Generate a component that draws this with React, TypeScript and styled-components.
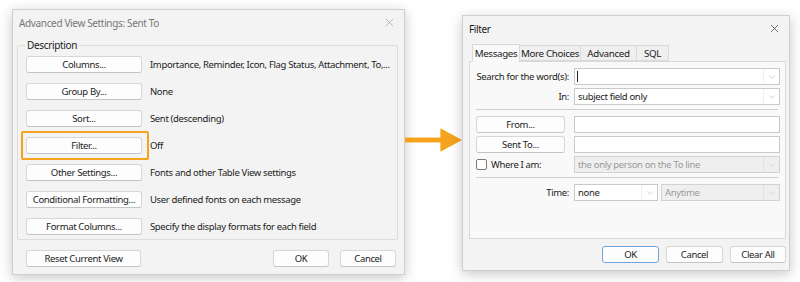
import styled, { createGlobalStyle, css } from 'styled-components'
import { X, ChevronDown } from 'lucide-react'

const fontSize = '9.5px'

const GlobalStyle = createGlobalStyle`
  html, body {
    margin: 0;
    padding: 0;
    background: #ffffff;
  }
  body {
    font-family: 'Noto Sans', 'Open Sans', sans-serif;
    font-size: ${fontSize};
    letter-spacing: -0.35px;
    color: #1c1c1c;
  }
`

const viewRows = [
  { label: 'Columns...', text: 'Importance, Reminder, Icon, Flag Status, Attachment, To,...' },
  { label: 'Group By...', text: 'None' },
  { label: 'Sort...', text: 'Sent (descending)' },
  { label: 'Filter...', text: 'Off', highlight: true },
  { label: 'Other Settings...', text: 'Fonts and other Table View settings' },
  { label: 'Conditional Formatting...', text: 'User defined fonts on each message' },
  { label: 'Format Columns...', text: 'Specify the display formats for each field' },
]

const tabs = [
  { label: 'Messages', width: 48 },
  { label: 'More Choices', width: 62 },
  { label: 'Advanced', width: 57 },
  { label: 'SQL', width: 33 },
]

function Dropdown({ value, disabled, width }: { value: string; disabled?: boolean; width?: number }) {
  return (
    <StyledSelect $disabled={disabled} style={width ? { width } : undefined}>
      <StyledSelectValue>{value}</StyledSelectValue>
      <StyledChevron $disabled={disabled}>
        <ChevronDown size={10} strokeWidth={1} />
      </StyledChevron>
    </StyledSelect>
  )
}

function AdvancedViewSettings() {
  return (
    <StyledDialog $width={393} $height={266} $top={0}>
      <StyledTitleBar $inactive>
        <span>Advanced View Settings: Sent To</span>
        <X size={13} strokeWidth={1} />
      </StyledTitleBar>
      <StyledGroupBox>
        <StyledLegend>Description</StyledLegend>
        {viewRows.map((row) => (
          <StyledViewRow key={row.label}>
            {row.highlight ? (
              <StyledHighlight>
                <StyledButton $width={116}>{row.label}</StyledButton>
              </StyledHighlight>
            ) : (
              <StyledButton $width={116}>{row.label}</StyledButton>
            )}
            <span>{row.text}</span>
          </StyledViewRow>
        ))}
      </StyledGroupBox>
      <StyledLeftFooter>
        <StyledButton $width={115}>Reset Current View</StyledButton>
        <StyledFooterRight>
          <StyledButton $width={56}>OK</StyledButton>
          <StyledButton $width={56}>Cancel</StyledButton>
        </StyledFooterRight>
      </StyledLeftFooter>
    </StyledDialog>
  )
}

function FilterDialog() {
  return (
    <StyledDialog $width={328} $height={256} $top={6}>
      <StyledTitleBar>
        <span>Filter</span>
        <X size={13} strokeWidth={1.2} />
      </StyledTitleBar>
      <StyledTabStrip>
        {tabs.map((tab, i) => (
          <StyledTab key={tab.label} $active={i === 0} $width={tab.width}>
            {tab.label}
          </StyledTab>
        ))}
      </StyledTabStrip>
      <StyledTabPanel>
        <StyledFormGrid>
          <StyledLabel>Search for the word(s):</StyledLabel>
          <StyledInputWrap>
            <StyledCaret />
            <Dropdown value="" />
          </StyledInputWrap>
          <StyledLabel>In:</StyledLabel>
          <Dropdown value="subject field only" />
        </StyledFormGrid>
        <StyledSeparator />
        <StyledFormGrid>
          <StyledButton $width={89}>From...</StyledButton>
          <StyledTextInput />
          <StyledButton $width={89}>Sent To...</StyledButton>
          <StyledTextInput />
          <StyledCheckLabel>
            <StyledCheckbox />
            Where I am:
          </StyledCheckLabel>
          <Dropdown value="the only person on the To line" disabled />
        </StyledFormGrid>
        <StyledSeparator />
        <StyledFormGrid>
          <StyledLabel>Time:</StyledLabel>
          <StyledTimeRow>
            <Dropdown value="none" width={84} />
            <Dropdown value="Anytime" disabled width={119} />
          </StyledTimeRow>
        </StyledFormGrid>
      </StyledTabPanel>
      <StyledRightFooter>
        <StyledButton $width={57} $default>OK</StyledButton>
        <StyledButton $width={57}>Cancel</StyledButton>
        <StyledButton $width={56}>Clear All</StyledButton>
      </StyledRightFooter>
    </StyledDialog>
  )
}

export default function App() {
  return (
    <>
      <GlobalStyle />
      <StyledPage>
        <AdvancedViewSettings />
        <StyledArrowColumn>
          <svg width="58" height="28" viewBox="0 0 58 28">
            <rect x="0" y="10.5" width="37" height="5" fill="#f6a21c" />
            <polygon points="36,1 58,13 36,25" fill="#f6a21c" />
          </svg>
        </StyledArrowColumn>
        <FilterDialog />
      </StyledPage>
    </>
  )
}

const StyledPage = styled.div`
  display: flex;
  align-items: flex-start;
  padding: 9px 0 0 12px;
  width: 800px;
  height: 282px;
  box-sizing: border-box;
`

const StyledDialog = styled.div<{ $width: number; $height: number; $top: number }>`
  width: ${(p) => p.$width}px;
  height: ${(p) => p.$height}px;
  margin-top: ${(p) => p.$top}px;
  box-sizing: border-box;
  background: #f3f3f3;
  border: 1px solid #cfcfcf;
  box-shadow: 0 3px 12px rgba(0, 0, 0, 0.22);
  display: flex;
  flex-direction: column;
  flex-shrink: 0;
`

const StyledTitleBar = styled.div<{ $inactive?: boolean }>`
  height: 25px;
  display: flex;
  align-items: center;
  justify-content: space-between;
  padding: 0 8px 0 6px;
  font-size: 10px;
  color: ${(p) => (p.$inactive ? '#777777' : '#1a1a1a')};
  svg {
    color: ${(p) => (p.$inactive ? '#8a8a8a' : '#222222')};
  }
`

const StyledGroupBox = styled.fieldset`
  margin: 3px 6px 0 4px;
  padding: 4px 8px 4px 8px;
  border: 1px solid #dddddd;
  border-radius: 2px;
  display: flex;
  flex-direction: column;
  gap: 10px;
  min-width: 0;
`

const StyledLegend = styled.legend`
  padding: 0 2px;
  margin-left: -1px;
  font-size: 10px;
  color: #1c1c1c;
`

const StyledViewRow = styled.div`
  display: flex;
  align-items: center;
  gap: 8px;
  white-space: nowrap;
`

const StyledHighlight = styled.div`
  margin: -6px -7px -6px -5px;
  padding: 4px 5px 4px 3px;
  border: 2px solid #f5a31f;
  border-radius: 2px;
  display: flex;
`

const StyledButton = styled.div<{ $width: number; $default?: boolean }>`
  width: ${(p) => p.$width}px;
  height: 17px;
  box-sizing: border-box;
  flex-shrink: 0;
  display: flex;
  align-items: center;
  justify-content: center;
  background: #fdfdfd;
  border: 1px solid #d6d6d6;
  border-bottom-color: #c4c4c4;
  border-radius: 3px;
  font-size: ${fontSize};
  color: #1c1c1c;
  white-space: nowrap;
  ${(p) =>
    p.$default &&
    css`
      border: 1px solid #6fa4d8;
    `}
`

const StyledLeftFooter = styled.div`
  display: flex;
  justify-content: space-between;
  align-items: center;
  padding: 10px 8px 0 13px;
`

const StyledFooterRight = styled.div`
  display: flex;
  gap: 11px;
`

const StyledArrowColumn = styled.div`
  width: 57px;
  margin-top: 118px;
  flex-shrink: 0;
  display: flex;
  svg {
    display: block;
  }
`

const StyledTabStrip = styled.div`
  display: flex;
  align-items: flex-end;
  height: 18px;
  margin: 2px 0 0 9px;
`

const StyledTab = styled.div<{ $active?: boolean; $width: number }>`
  width: ${(p) => p.$width}px;
  height: ${(p) => (p.$active ? 18 : 16)}px;
  box-sizing: border-box;
  flex-shrink: 0;
  display: flex;
  align-items: center;
  justify-content: center;
  white-space: nowrap;
  font-size: 9.8px;
  background: ${(p) => (p.$active ? '#f9f9f9' : '#efefef')};
  border: 1px solid #d9d9d9;
  border-bottom: ${(p) => (p.$active ? 'none' : '1px solid #d9d9d9')};
  margin-left: ${(p) => (p.$active ? 0 : -1)}px;
  position: relative;
  z-index: ${(p) => (p.$active ? 1 : 0)};
  margin-bottom: ${(p) => (p.$active ? -1 : 0)}px;
`

const StyledTabPanel = styled.div`
  margin: 0 3px 0 6px;
  height: 178px;
  box-sizing: border-box;
  background: #f9f9f9;
  border: 1px solid #d9d9d9;
  padding: 6px 5px 0 6px;
`

const StyledFormGrid = styled.div`
  display: grid;
  grid-template-columns: 93px 206px;
  column-gap: 5px;
  row-gap: 3px;
  align-items: center;
`

const StyledLabel = styled.div`
  text-align: right;
  white-space: nowrap;
`

const StyledSelect = styled.div<{ $disabled?: boolean }>`
  height: 17px;
  box-sizing: border-box;
  display: flex;
  align-items: center;
  background: ${(p) => (p.$disabled ? '#efefef' : '#ffffff')};
  border: 1px solid ${(p) => (p.$disabled ? '#d2d2d2' : '#c9c9c9')};
  color: ${(p) => (p.$disabled ? '#9a9a9a' : '#1c1c1c')};
  flex-shrink: 0;
`

const StyledSelectValue = styled.div`
  flex: 1;
  padding-left: 3px;
  white-space: nowrap;
  overflow: hidden;
`

const StyledChevron = styled.div<{ $disabled?: boolean }>`
  width: 15px;
  height: 100%;
  display: flex;
  align-items: center;
  justify-content: center;
  color: ${(p) => (p.$disabled ? '#b5b5b5' : '#8c8c8c')};
  border-left: 1px solid ${(p) => (p.$disabled ? '#e3e3e3' : '#efefef')};
`

const StyledInputWrap = styled.div`
  position: relative;
`

const StyledCaret = styled.span`
  position: absolute;
  left: 3px;
  top: 3px;
  width: 1px;
  height: 11px;
  background: #222222;
`

const StyledTextInput = styled.div`
  height: 17px;
  box-sizing: border-box;
  background: #ffffff;
  border: 1px solid #c9c9c9;
`

const StyledSeparator = styled.div`
  height: 1px;
  background: #cfcfcf;
  margin: 4px 2px 6px 0;
`

const StyledCheckLabel = styled.div`
  display: flex;
  align-items: center;
  gap: 4px;
  white-space: nowrap;
`

const StyledCheckbox = styled.span`
  width: 11px;
  height: 11px;
  box-sizing: border-box;
  border: 1px solid #7a7a7a;
  border-radius: 2px;
  background: #ffffff;
`

const StyledTimeRow = styled.div`
  display: flex;
  gap: 3px;
`

const StyledRightFooter = styled.div`
  display: flex;
  justify-content: flex-end;
  gap: 7px;
  padding: 7px 3px 0 0;
`
